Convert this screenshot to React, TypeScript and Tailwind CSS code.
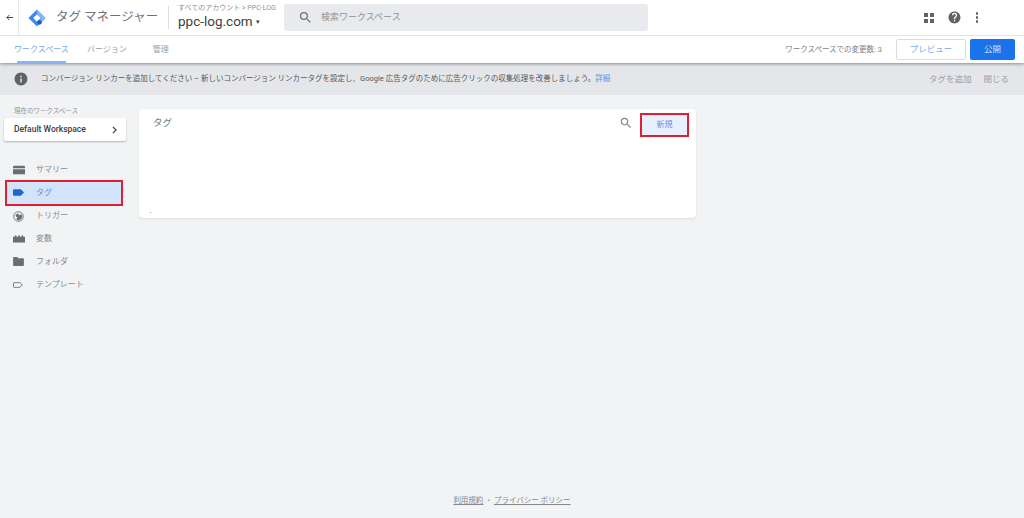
import React from 'react';

const FONT = '"Roboto", "Noto Sans CJK JP", sans-serif';

function Logo() {
  return (
    <svg viewBox="0 0 20 20" className="w-[18px] h-[18px] shrink-0">
      <path d="M10 0.5 L19.5 10 L10 19.5 L0.5 10 Z" fill="#4285f4" />
      <path d="M10 0.5 L19.500 10 L14.500 15 L12.500 13 L14.800 10 L10 5.200 Z" fill="#8ab4f8" />
      <path d="M10 5.800 L14.200 10 L10 14.200 L5.800 10 Z" fill="#ffffff" />
      <circle cx="12.800" cy="14.800" r="2.600" fill="#1a5fc8" />
    </svg>
  );
}

function SearchIcon({ className }: { className: string }) {
  return (
    <svg viewBox="0 0 24 24" className={className} fill="currentColor">
      <path d="M15.5 14h-.79l-.28-.27A6.47 6.47 0 0 0 16 9.5 6.5 6.5 0 1 0 9.5 16c1.61 0 3.09-.59 4.23-1.57l.27.28v.79l5 4.99L20.49 19l-4.99-5zm-6 0C7.01 14 5 11.99 5 9.5S7.01 5 9.5 5 14 7.01 14 9.5 11.99 14 9.5 14z" />
    </svg>
  );
}

function GridIcon() {
  return (
    <svg viewBox="0 0 10 10" className="w-[10px] h-[10px]" fill="#5f6368">
      <rect x="0" y="0" width="4" height="4" />
      <rect x="6" y="0" width="4" height="4" />
      <rect x="0" y="6" width="4" height="4" />
      <rect x="6" y="6" width="4" height="4" />
    </svg>
  );
}

function HelpIcon() {
  return (
    <svg viewBox="0 0 24 24" className="w-[13px] h-[13px]" fill="#5f6368">
      <path d="M12 1C5.9 1 1 5.9 1 12s4.9 11 11 11 11-4.9 11-11S18.1 1 12 1zm1.2 18h-2.4v-2.4h2.4V19zm2.5-8.3-1.1 1.1c-.9.9-1.4 1.6-1.4 3.2h-2.4v-.6c0-1.3.5-2.5 1.4-3.4l1.5-1.5c.4-.4.7-1 .7-1.7 0-1.3-1.1-2.4-2.4-2.4S9.6 6.5 9.6 7.8H7.2a4.8 4.8 0 0 1 9.6 0c0 1.1-.4 2.1-1.1 2.9z" />
    </svg>
  );
}

function InfoIcon() {
  return (
    <svg viewBox="0 0 24 24" className="w-[14px] h-[14px]" fill="#5f6368">
      <path d="M12 1C5.9 1 1 5.9 1 12s4.9 11 11 11 11-4.9 11-11S18.1 1 12 1zm1.3 17h-2.6v-7h2.6v7zm0-9h-2.6V6.3h2.6V9z" />
    </svg>
  );
}

const navIcons: Record<string, React.ReactNode> = {
  summary: (
    <svg viewBox="0 0 14 10" className="w-[12px] h-[10px]" fill="#6a6e73">
      <path d="M1.5 0h11A1.5 1.5 0 0 1 14 1.5V3H0V1.5A1.5 1.5 0 0 1 1.5 0zM0 4h14v6H0z" />
    </svg>
  ),
  tag: (
    <svg viewBox="0 0 14 8" className="w-[11px] h-[7px]" fill="#1967d2">
      <path d="M1 0h9l4 4-4 4H1a1 1 0 0 1-1-1V1a1 1 0 0 1 1-1z" />
    </svg>
  ),
  trigger: (
    <svg viewBox="0 0 12 12" className="w-[11px] h-[11px]">
      <circle cx="6" cy="6" r="5.2" fill="none" stroke="#6a6e73" strokeWidth="1" />
      <path d="M8.8 3.4A3.8 3.800 0 0 1 3.4 8.8z" fill="#6a6e73" />
      <circle cx="5" cy="5" r="2" fill="#6a6e73" />
    </svg>
  ),
  variable: (
    <svg viewBox="0 0 14 8" className="w-[12px] h-[8px]" fill="#6a6e73">
      <path d="M0 8V1.5h2V0h2v1.5h2V0h2v1.5h2V0h2v1.5h2V8z" />
    </svg>
  ),
  folder: (
    <svg viewBox="0 0 12 10" className="w-[11px] h-[9px]" fill="#6a6e73">
      <path d="M1 0h3.5L6 1.5h5a1 1 0 0 1 1 1V9a1 1 0 0 1-1 1H1a1 1 0 0 1-1-1V1a1 1 0 0 1 1-1z" />
    </svg>
  ),
  template: (
    <svg viewBox="0 0 14 8" className="w-[10px] h-[8px]" fill="none" stroke="#6a6e73" strokeWidth="1.2">
      <path d="M1.5 .7h8L13 4 9.5 7.3h-8a.8.8 0 0 1-.8-.8v-5a.8.8 0 0 1 .8-.8z" />
    </svg>
  ),
};

const nav = [
  { id: 'summary', label: 'サマリー' },
  { id: 'tag', label: 'タグ', active: true },
  { id: 'trigger', label: 'トリガー' },
  { id: 'variable', label: '変数' },
  { id: 'folder', label: 'フォルダ' },
  { id: 'template', label: 'テンプレート' },
];

export default function App() {
  return (
    <div className="h-[518px] w-[1024px] flex flex-col overflow-hidden bg-[#f1f3f4] text-[#5f6368]" style={{ fontFamily: FONT }}>
      {/* top bars */}
      <header className="bg-white shadow-[0_1px_3px_rgba(60,64,67,0.55)] relative z-10 shrink-0">
        <div className="h-[36px] flex items-center border-b border-[#e3e4e6]">
          <div className="w-[19px] h-full flex items-center justify-center border-r border-[#e8e9eb]">
            <svg viewBox="0 0 8 8" className="w-[7px] h-[7px]" fill="none" stroke="#444" strokeWidth="1.1">
              <path d="M8 4H1M4 1L1 4l3 3" />
            </svg>
          </div>
          <div className="ml-[9px]"><Logo /></div>
          <span className="ml-[10px] text-[12.5px] text-[#6f7378] whitespace-nowrap w-[103px]">タグ マネージャー</span>
          <div className="ml-[9px] w-px h-[23px] bg-[#dcdde0]" />
          <div className="ml-[9px] w-[106px] flex flex-col">
            <span className="text-[7px] leading-[8px] text-[#8f9397] whitespace-nowrap">すべてのアカウント &gt; PPC-LOG</span>
            <span className="mt-[1px] text-[13.5px] leading-[17px] text-[#3c4043] whitespace-nowrap">
              ppc-log.com <span className="text-[7px] align-[2px]">▾</span>
            </span>
          </div>
          <div className="w-[364px] h-[27px] rounded-[3px] bg-[#e8eaed] flex items-center pl-[14px]">
            <SearchIcon className="w-[15px] h-[15px] text-[#6f7378]" />
            <span className="ml-[8px] text-[9px] text-[#8f9397]">検索ワークスペース</span>
          </div>
          <div className="ml-auto mr-[46px] flex items-center">
            <GridIcon />
            <div className="ml-[14px]"><HelpIcon /></div>
            <div className="ml-[15px] flex flex-col gap-[1.5px]">
              <span className="w-[2.5px] h-[2.5px] rounded-full bg-[#5f6368]" />
              <span className="w-[2.5px] h-[2.5px] rounded-full bg-[#5f6368]" />
              <span className="w-[2.5px] h-[2.5px] rounded-full bg-[#5f6368]" />
            </div>
          </div>
        </div>
        <div className="h-[27px] flex items-center text-[8px]">
          <div className="ml-[14px] h-full w-[55px] flex items-center relative text-[#7aa7ee] whitespace-nowrap">
            ワークスペース
            <span className="absolute left-[3px] right-[3px] bottom-0 h-[2px] bg-[#8ab4f8]" />
          </div>
          <span className="ml-[18px] whitespace-nowrap text-[#9a9da1]">バージョン</span>
          <span className="ml-[26px] whitespace-nowrap text-[#9a9da1]">管理</span>
          <span className="ml-auto text-[7.5px] text-[#7d8186] whitespace-nowrap">ワークスペースでの変更数: 3</span>
          <div className="ml-[14px] w-[70px] h-[21px] rounded-[2px] border border-[#dadce0] flex items-center justify-center text-[8.5px] text-[#7aa7ee]">プレビュー</div>
          <div className="ml-[4px] mr-[9px] w-[45px] h-[21px] rounded-[2px] bg-[#1a73e8] flex items-center justify-center text-[8.5px] text-[#cfe0fb]">公開</div>
        </div>
      </header>

      {/* notice */}
      <div className="h-[32px] shrink-0 bg-[#e4e6e9] flex items-center text-[7.5px] text-[#55585c]">
        <div className="ml-[14px] mr-[13px]"><InfoIcon /></div>
        <span className="whitespace-nowrap">
          コンバージョン リンカーを追加してください – 新しいコンバージョン リンカータグを設定し、Google 広告タグのために広告クリックの収集処理を改善しましょう。<span className="text-[#5a95e8]">詳細</span>
        </span>
        <span className="ml-auto text-[8.5px] text-[#9a9da1] whitespace-nowrap">タグを追加</span>
        <span className="ml-[12px] mr-[15px] text-[8.5px] text-[#9a9da1] whitespace-nowrap">閉じる</span>
      </div>

      {/* body */}
      <div className="flex-1 flex items-start">
        <aside className="w-[139px] shrink-0">
          <div className="mt-[12px] ml-[14px] text-[6.5px] leading-[8px] text-[#8f9397] whitespace-nowrap">現在のワークスペース</div>
          <div className="ml-[4px] mt-[3px] w-[122px] h-[23px] bg-white rounded-[2px] shadow-[0_1px_2px_rgba(60,64,67,0.35)] flex items-center justify-between pl-[10px] pr-[9px] text-[8.5px] font-medium text-[#3c4043]">
            <span>Default Workspace</span>
            <svg viewBox="0 0 8 12" className="w-[5px] h-[8px]" fill="none" stroke="#3c4043" strokeWidth="2"><path d="M1.5 1l5 5-5 5" /></svg>
          </div>
          <nav className="mt-[18px] ml-[5px] w-[118px] flex flex-col">
            {nav.map((item) => (
              <div
                key={item.id}
                className={
                  item.active
                    ? 'h-[26px] -mt-[2px] -mb-[1px] flex items-center bg-[#d2e3fc] border-2 border-[#e02030] text-[#5a95e8] text-[8px]'
                    : 'h-[22.8px] flex items-center border-2 border-transparent text-[#85898d] text-[8px]'
                }
              >
                <span className="w-[24px] pl-[6px] flex justify-start">{navIcons[item.id]}</span>
                <span className="ml-[5px] whitespace-nowrap">{item.label}</span>
              </div>
            ))}
          </nav>
        </aside>

        <main className="mt-[14px] w-[557px] h-[109px] bg-white rounded-[4px] shadow-[0_1px_2px_rgba(60,64,67,0.12)] flex items-start relative">
          <span className="mt-[7px] ml-[14px] text-[9.5px] text-[#75797d]">タグ</span>
          <div className="ml-auto mt-[7px] mr-[7px] flex items-start">
            <SearchIcon className="w-[14px] h-[14px] text-[#85898d]" />
            <div className="ml-[7px] -mt-[3px] w-[49px] h-[24px] border-2 border-[#e02030] bg-[#e8f0fe] flex items-center justify-center text-[8px] text-[#5a95e8]">新規</div>
          </div>
          <span className="absolute left-[11px] bottom-[5px] w-px h-px bg-[#a0a3a8]" />
        </main>
      </div>

      <footer className="h-[31px] shrink-0 flex justify-center pt-[8px] text-[7.5px] leading-[12px] text-[#85898d]">
        <span className="underline">利用規約</span>
        <span className="mx-[4px]">•</span>
        <span className="underline">プライバシー ポリシー</span>
      </footer>
    </div>
  );
}
